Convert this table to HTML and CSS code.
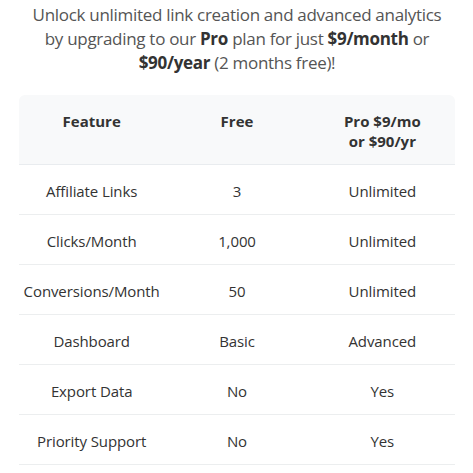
FILE: index.html
```html
<!DOCTYPE html>
<html>
<head>
<meta charset="utf-8">
<link rel="stylesheet" href="styles.css">
</head>
<body>
<div class="wrap">
  <p class="intro">Unlock unlimited link creation and advanced analytics by upgrading to our <strong>Pro</strong> plan for just <strong>$9/month</strong> or <strong>$90/year</strong> (2 months free)!</p>
  <table class="compare">
    <thead>
      <tr><th>Feature</th><th>Free</th><th>Pro $9/mo<br>or $90/yr</th></tr>
    </thead>
    <tbody>
      <tr><td>Affiliate Links</td><td>3</td><td>Unlimited</td></tr>
      <tr><td>Clicks/Month</td><td>1,000</td><td>Unlimited</td></tr>
      <tr><td>Conversions/Month</td><td>50</td><td>Unlimited</td></tr>
      <tr><td>Dashboard</td><td>Basic</td><td>Advanced</td></tr>
      <tr><td>Export Data</td><td>No</td><td>Yes</td></tr>
      <tr><td>Priority Support</td><td>No</td><td>Yes</td></tr>
    </tbody>
  </table>
</div>
</body>
</html>
```
FILE: styles.css
```css
html, body { margin: 0; padding: 0; background: #fff; }
body { font-family: "Open Sans", "Noto Sans", sans-serif; color: #333; }
.wrap { padding: 3px 18px 0 19px; }
.intro {
  margin: 0 4px 20px;
  text-align: center;
  font-size: 17px;
  letter-spacing: -0.3px;
  line-height: 24px;
  color: #555;
}
.intro strong { color: #333; font-weight: 700; }
.compare {
  width: 436px;
  border-collapse: collapse;
  table-layout: fixed;
  font-size: 15px;
}
.compare th, .compare td {
  text-align: center;
  padding: 15.5px 4px 13.5px;
  line-height: 20px;
}
.compare thead tr { background: #f8f9fa; }
.compare th { font-weight: 700; vertical-align: top; color: #333; }
.compare th:first-child { border-top-left-radius: 6px; }
.compare th:last-child { border-top-right-radius: 6px; }
.compare td { border-bottom: 1px solid #eceeef; color: #333; letter-spacing: -0.1px; }
.compare thead th { border-bottom: 1px solid #e9ecef; }
```
